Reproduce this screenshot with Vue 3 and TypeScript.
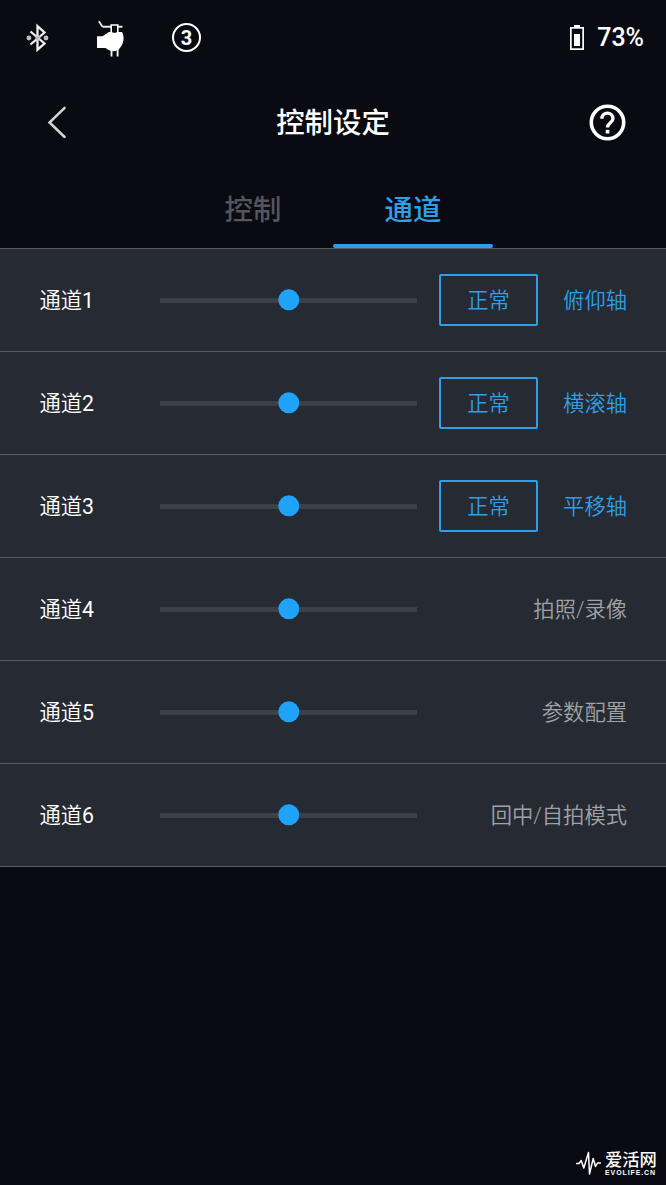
<script setup lang="ts">
interface Channel {
  name: string
  num: number
  value: number
  action: string
  mode?: string
}

const channels: Channel[] = [
  { name: '通道', num: 1, value: 50, action: '俯仰轴', mode: '正常' },
  { name: '通道', num: 2, value: 50, action: '横滚轴', mode: '正常' },
  { name: '通道', num: 3, value: 50, action: '平移轴', mode: '正常' },
  { name: '通道', num: 4, value: 50, action: '拍照/录像' },
  { name: '通道', num: 5, value: 50, action: '参数配置' },
  { name: '通道', num: 6, value: 50, action: '回中/自拍模式' },
]
</script>

<template>
  <main class="screen">
    <div class="status">
      <svg class="bluetooth" width="24" height="32" viewBox="0 0 24 32">
        <path d="M4.5 9.5 18.5 21.5 11.5 27.6V4.2L18.5 10.5 4.5 22.5" fill="none" stroke="#eeeef0" stroke-width="2.3" />
        <circle cx="2.9" cy="16" r="2.4" fill="#bdbdc2" />
        <circle cx="20" cy="16" r="2.4" fill="#bdbdc2" />
        <circle cx="11.7" cy="16" r="2.4" fill="#bdbdc2" />
      </svg>
      <svg class="gimbal" width="30" height="38" viewBox="0 0 30 38">
        <path d="M2.5 2.5C5 3 4.5 7.7 7.5 7.7H26.5" fill="none" stroke="#e5e5e8" stroke-width="1.9" />
        <path d="M1 17.3H6.5L13 13H26C29 18 27.5 25 24 29C20.5 33.5 14 33 9.5 29H1Z" fill="#fff" />
        <path d="M15.2 6H21.8V13L20.5 14.5H16.5L15.2 13Z" fill="#0a0a13" stroke="#fff" stroke-width="1.6" />
        <path d="M15.5 30V37.5M21.6 30V37.5" stroke="#f4f4f6" stroke-width="1.9" />
      </svg>
      <span class="profile">3</span>
      <svg class="battery" width="14" height="25" viewBox="0 0 14 25">
        <path d="M4 0H10V2H14V25H0V2H4Z" fill="#fff" />
        <path d="M1.7 3.7H12.3V23.3H1.7Z" fill="#0a0a13" />
        <path d="M4 9H10V21H4Z" fill="#fff" />
      </svg>
      <span class="percent">73%</span>
    </div>

    <header class="titlebar">
      <svg class="back" width="20" height="34" viewBox="0 0 20 34">
        <path d="M17.6 2.8 2.5 17.5 17.6 32" fill="none" stroke="#d4d4d8" stroke-width="2.5" stroke-linecap="round" />
      </svg>
      <h1>控制设定</h1>
      <svg class="help" width="37" height="37" viewBox="0 0 37 37">
        <g transform="translate(.5 .5)">
          <circle cx="18" cy="18" r="16.2" fill="none" stroke="#fff" stroke-width="3.6" />
          <path d="M12.4 14.2C12.4 6.8 23.4 6.8 23.4 14.2C23.4 18 18 18.6 18 23" fill="none" stroke="#fff" stroke-width="3.4" />
          <path d="M16.2 25.3H19.9V29H16.2Z" fill="#fff" />
        </g>
      </svg>
    </header>

    <nav class="tabs">
      <span class="tab">控制</span>
      <span class="tab active">通道</span>
    </nav>

    <section class="list">
      <div v-for="c in channels" :key="c.num" class="row">
        <span class="name">{{ c.name }}<span class="num">{{ c.num }}</span></span>
        <div class="track">
          <i class="knob" :style="{ left: c.value + '%' }"></i>
        </div>
        <span v-if="c.mode" class="mode">{{ c.mode }}</span>
        <span class="action" :class="{ linked: c.mode }">{{ c.action }}</span>
      </div>
    </section>

    <footer class="brand">
      <svg width="27" height="26" viewBox="0 0 27 26">
        <path d="M1 12.5H4L6.2 9.5 8.8 17 13.5 1.5 14.5 23 18.2 7.5 20.5 15.5 22.5 12H26" fill="none" stroke="#fff" stroke-width="1.5" stroke-linejoin="round" />
      </svg>
      <div class="brand-text">
        <span class="brand-name">爱活网</span>
        <span class="brand-url">EVOLIFE.CN</span>
      </div>
    </footer>
  </main>
</template>

<style>
body {
  background: #0a0a13;
}
</style>

<style scoped>
.screen {
  box-sizing: border-box;
  width: 666px;
  height: 1185px;
  overflow: hidden;
  display: flex;
  flex-direction: column;
  background: #0a0a13;
  color: #fff;
  font-family: Roboto, "Noto Sans CJK SC", sans-serif;
}
svg {
  display: block;
  flex: none;
}
.status {
  height: 75px;
  box-sizing: border-box;
  padding: 0 22px 0 26px;
  display: flex;
  align-items: center;
}
.gimbal {
  margin: 0 0 0 46px;
}
.profile {
  box-sizing: border-box;
  width: 29px;
  height: 29px;
  margin-left: 46px;
  border: 2px solid #fff;
  border-radius: 50%;
  font-size: 20px;
  font-weight: 700;
  line-height: 26px;
  text-align: center;
}
.battery {
  margin-left: auto;
}
.percent {
  margin-left: 13.5px;
  padding-top: 1px;
  font-size: 25px;
  line-height: 30px;
  font-weight: 500;
}
.titlebar {
  height: 95px;
  box-sizing: border-box;
  padding: 0 40px 0 47px;
  display: flex;
  align-items: center;
  justify-content: space-between;
}
.back {
  margin-bottom: 1px;
}
h1 {
  margin: 2px 0 0 10px;
  font-size: 28.4px;
  line-height: 40px;
  font-weight: 500;
}
.tabs {
  height: 78px;
  display: flex;
  justify-content: center;
}
.tab {
  box-sizing: border-box;
  width: 160px;
  height: 78px;
  color: #55555c;
  font-size: 28.4px;
  line-height: 82px;
  font-weight: 500;
  text-align: center;
}
.tab.active {
  color: #2e9fe8;
  position: relative;
}
.tab.active::after {
  content: "";
  position: absolute;
  left: 0;
  right: 0;
  bottom: 0;
  height: 4px;
  border-radius: 2px;
  background: #2e9fe8;
}
.list {
  border-top: 1px solid #595b61;
  background: #262a32;
}
.row {
  box-sizing: border-box;
  height: 103px;
  padding: 0 39px;
  border-bottom: 1px solid #595b61;
  display: flex;
  align-items: center;
  font-size: 21.3px;
  font-weight: 350;
  line-height: 32px;
}
.name {
  width: 120.5px;
  margin-left: 0.5px;
  padding-top: 2px;
  flex: none;
}
.num {
  font-weight: 400;
}
.track {
  position: relative;
  flex: none;
  width: 257px;
  height: 5px;
  background: #3c4047;
}
.knob {
  position: absolute;
  top: 50%;
  width: 21.4px;
  height: 21.4px;
  border-radius: 50%;
  background: #1fa2fa;
  transform: translate(-50%, -50%);
}
.mode {
  box-sizing: border-box;
  width: 99px;
  height: 52px;
  margin-left: 22px;
  border: 2px solid #2e9fe8;
  border-radius: 2px;
  color: #2e9fe8;
  line-height: 49px;
  text-align: center;
}
.action {
  margin-left: auto;
  padding-top: 2px;
  color: #a0a2a6;
}
.action.linked {
  color: #2e9fe8;
}
.brand {
  margin-top: auto;
  padding: 0 9px 8px 0;
  display: flex;
  align-items: center;
  justify-content: flex-end;
  gap: 3px;
}
.brand-text {
  display: flex;
  flex-direction: column;
  width: 52px;
}
.brand-name {
  font-size: 17.3px;
  line-height: 18px;
  font-weight: 500;
}
.brand-url {
  font: 700 7px/8px "Liberation Sans", sans-serif;
  letter-spacing: 0.9px;
  white-space: nowrap;
}
</style>
